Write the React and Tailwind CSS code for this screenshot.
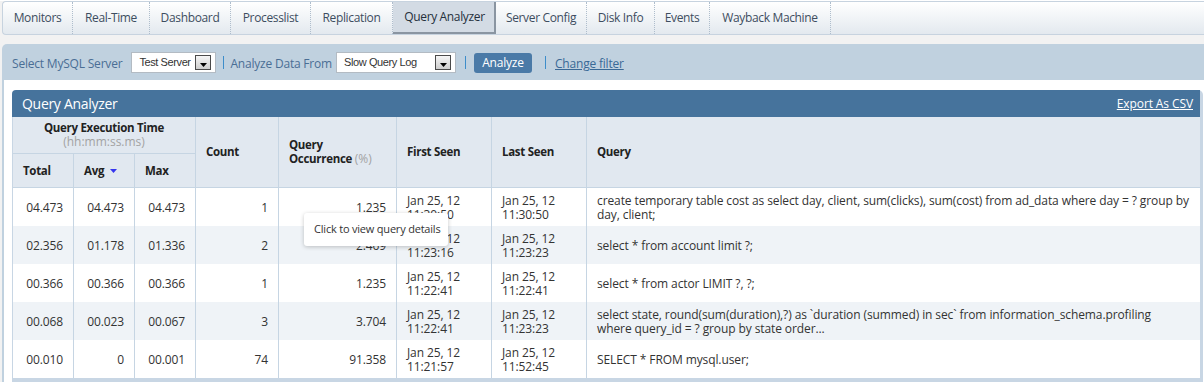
import React from 'react';

const TABS = [
  { label: 'Monitors', width: 'w-[70px]' },
  { label: 'Real-Time', width: 'w-[77px]' },
  { label: 'Dashboard', width: 'w-[81px]' },
  { label: 'Processlist', width: 'w-[80px]' },
  { label: 'Replication', width: 'w-[82px]' },
  { label: 'Query Analyzer', width: 'w-[103px]', active: true },
  { label: 'Server Config', width: 'w-[91px]' },
  { label: 'Disk Info', width: 'w-[68px]' },
  { label: 'Events', width: 'w-[55px]' },
  { label: 'Wayback Machine', width: 'w-[121px]' },
];

const ROWS = [
  {
    total: '04.473', avg: '04.473', max: '04.473', count: 1, occurrence: '1.235',
    firstSeen: ['Jan 25, 12', '11:30:50'], lastSeen: ['Jan 25, 12', '11:30:50'],
    query: 'create temporary table cost as select day, client, sum(clicks), sum(cost) from ad_data where day = ? group by\nday, client;',
  },
  {
    total: '02.356', avg: '01.178', max: '01.336', count: 2, occurrence: '2.469',
    firstSeen: ['Jan 25, 12', '11:23:16'], lastSeen: ['Jan 25, 12', '11:23:23'],
    query: 'select * from account limit ?;',
  },
  {
    total: '00.366', avg: '00.366', max: '00.366', count: 1, occurrence: '1.235',
    firstSeen: ['Jan 25, 12', '11:22:41'], lastSeen: ['Jan 25, 12', '11:22:41'],
    query: 'select * from actor LIMIT ?, ?;',
  },
  {
    total: '00.068', avg: '00.023', max: '00.067', count: 3, occurrence: '3.704',
    firstSeen: ['Jan 25, 12', '11:22:41'], lastSeen: ['Jan 25, 12', '11:23:23'],
    query: 'select state, round(sum(duration),?) as `duration (summed) in sec` from information_schema.profiling\nwhere query_id = ? group by state order...',
  },
  {
    total: '00.010', avg: '0', max: '00.001', count: 74, occurrence: '91.358',
    firstSeen: ['Jan 25, 12', '11:21:57'], lastSeen: ['Jan 25, 12', '11:52:45'],
    query: 'SELECT * FROM mysql.user;',
  },
];

const DownArrow = ({ color = '#000' }) => (
  <svg width="7" height="4" viewBox="0 0 7 4">
    <path d="M0 0h7L3.5 4z" fill={color} />
  </svg>
);

const Select = ({ value, width }) => (
  <div className={`flex h-[21px] ${width} items-center justify-between border border-[#b3bbc3] bg-white pl-[7px] pr-[4px]`}>
    <span className="font-['Liberation_Sans',Arial,sans-serif] text-[11px] tracking-[-0.4px] text-[#333]">{value}</span>
    <span className="flex h-[15px] w-[16px] items-end justify-center border border-[#4a4a4a] bg-linear-to-b from-[#f6f6f6] to-[#cdcdcd] pb-[2px]">
      <DownArrow />
    </span>
  </div>
);

const Divider = ({ className }) => <div className={`h-[13px] w-px bg-[#3d8dca] ${className}`} />;

const App = () => {
  const th = 'border-r border-b border-[#c6d5e3] bg-[#e1e8f0] px-[10px] text-left align-middle font-bold text-[#222]';

  return (
    <div className="min-h-[382px] w-full bg-[#f2f2f2] font-['Open_Sans',sans-serif] text-[12px] tracking-[-0.1px]">
      {/* tabs */}
      <div className="ml-[2px] mt-px flex h-[34px] rounded-l-[4px] border-y border-l border-[#c7d3df] bg-linear-to-b from-white to-[#e3e9ef]">
        {TABS.map((tab) =>
          tab.active ? (
            <div
              key={tab.label}
              className={`${tab.width} flex items-center justify-center border-r-2 border-b-2 border-[#8a95a1] bg-[#d3dbe4] pl-[2px] text-[12px] tracking-[-0.35px] text-[#25303c]`}
            >
              {tab.label}
            </div>
          ) : (
            <div
              key={tab.label}
              className={`${tab.width} flex items-center justify-center border-r border-dotted border-[#aebdcc] text-[12px] tracking-[-0.35px] text-[#3d4d60]`}
            >
              {tab.label}
            </div>
          )
        )}
      </div>

      {/* filter panel */}
      <div className="ml-[2px] mt-[9px] rounded-tl-[5px] bg-[#c0d1df]">
        <div className="flex h-[36px] items-center pl-[10px] pt-px tracking-[-0.2px] text-[#4a6e95]">
          <span className="pt-[3px]">Select MySQL Server</span>
          <div className="ml-[9px]">
            <Select value="Test Server" width="w-[85px]" />
          </div>
          <Divider className="ml-[7px]" />
          <span className="ml-[6px] pt-[3px]">Analyze Data From</span>
          <div className="ml-[4px]">
            <Select value="Slow Query Log" width="w-[120px]" />
          </div>
          <Divider className="ml-[9px]" />
          <button className="ml-[8px] h-[20px] w-[58px] rounded-[3px] bg-[#4a7aa7] pt-px text-[12px] text-white">
            Analyze
          </button>
          <Divider className="ml-[13px]" />
          <a className="ml-[9px] pt-[3px] text-[#3a6996] underline">Change filter</a>
        </div>

        <div className="ml-[2px] bg-white pl-[8px] pr-px pt-[10px]">
          <div className="relative rounded-tr-[5px] border-r-[3px] border-[#c8d6e4]">
            <div className="flex h-[27px] items-center justify-between rounded-tl-[4px] bg-[#46739c] pl-[10px] pr-[7px] text-white">
              <span className="text-[14px] tracking-[-0.3px]">Query Analyzer</span>
              <a className="underline">Export As CSV</a>
            </div>

            <div className="border-l border-b-4 border-[#c8d6e4]">
              <table className="w-full table-fixed border-separate border-spacing-0">
                <colgroup>
                  <col className="w-[61px]" />
                  <col className="w-[61px]" />
                  <col className="w-[61px]" />
                  <col className="w-[83px]" />
                  <col className="w-[118px]" />
                  <col className="w-[95px]" />
                  <col className="w-[95px]" />
                  <col />
                </colgroup>
                <thead className="text-[11.5px] leading-[14px] tracking-[-0.3px]">
                  <tr>
                    <th colSpan={3} className={`${th} h-[37px] !text-center`}>
                      <div>Query Execution Time</div>
                      <div className="text-[12px] font-normal tracking-[0px] text-[#a3a3a3]">(hh:mm:ss.ms)</div>
                    </th>
                    <th rowSpan={2} className={th}>Count</th>
                    <th rowSpan={2} className={th}>
                      Query Occurrence <span className="text-[12px] font-normal tracking-[0px] text-[#a3a3a3]">(%)</span>
                    </th>
                    <th rowSpan={2} className={th}>First Seen</th>
                    <th rowSpan={2} className={th}>Last Seen</th>
                    <th rowSpan={2} className={`${th} border-r-0`}>Query</th>
                  </tr>
                  <tr>
                    <th className={`${th} h-[34px]`}>Total</th>
                    <th className={th}>
                      <span className="flex items-center gap-[6px]">
                        Avg <DownArrow color="#3535ee" />
                      </span>
                    </th>
                    <th className={th}>Max</th>
                  </tr>
                </thead>
                <tbody className="leading-[14px] text-[#333]">
                  {ROWS.map((row, key) => {
                    const bg = key % 2 === 1 ? 'bg-[#eff3f7]' : 'bg-white';
                    const cell = `border-r border-[#c6d5e3] px-[10px] pt-px align-middle ${bg}`;
                    return (
                      <tr key={key} className="h-[38px]">
                        <td className={`${cell} text-right`}>{row.total}</td>
                        <td className={`${cell} text-right`}>{row.avg}</td>
                        <td className={`${cell} text-right`}>{row.max}</td>
                        <td className={`${cell} text-right`}>{row.count}</td>
                        <td className={`${cell} text-right`}>{row.occurrence}</td>
                        <td className={cell}>
                          {row.firstSeen[0]}
                          <br />
                          {row.firstSeen[1]}
                        </td>
                        <td className={cell}>
                          {row.lastSeen[0]}
                          <br />
                          {row.lastSeen[1]}
                        </td>
                        <td className={`${cell} border-r-0 pr-[4px] whitespace-pre-line`}>{row.query}</td>
                      </tr>
                    );
                  })}
                </tbody>
              </table>
            </div>

            {/* hover tooltip */}
            <div className="absolute left-[292px] top-[123px] flex h-[33px] w-[144px] items-center rounded-[3px] bg-white pl-[10px] text-[11px] tracking-[-0.2px] text-[#333] shadow-[0_1px_4px_rgba(0,0,0,0.22)]">
              Click to view query details
            </div>
          </div>
        </div>
      </div>
    </div>
  );
};

export default App;
